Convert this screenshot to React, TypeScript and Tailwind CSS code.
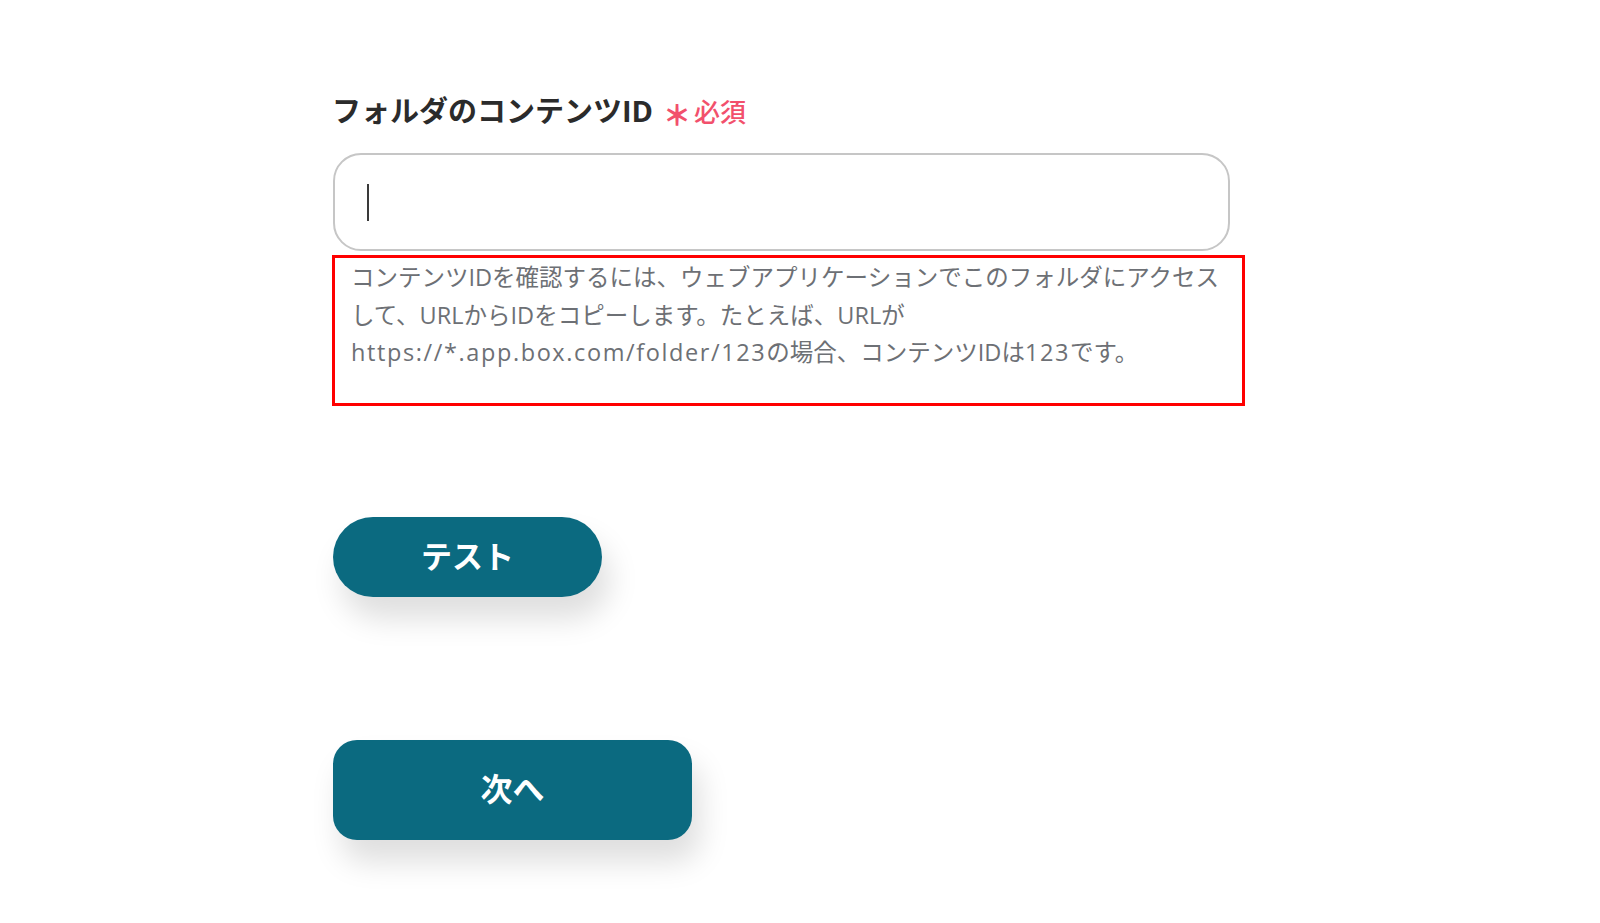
const jp = { fontFamily: '"Open Sans", "Noto Sans CJK JP", "Noto Sans", sans-serif' };

export default function App() {
  return (
    <div className="min-h-[923px] w-full bg-white pl-[332px] pt-[91px]" style={jp}>
      {/* field label */}
      <div className="flex h-[40px] items-center">
        <span className="text-[29px] font-bold leading-[40px] text-[#2b2b2b]">フォルダのコンテンツID</span>
        <span className="ml-[10px] translate-y-[4px] text-[28px] font-black leading-[40px] text-[#f2506c]">＊</span>
        <span className="ml-[3px] translate-y-[1px] text-[26px] font-medium leading-[40px] text-[#f2506c]">必須</span>
      </div>

      {/* input */}
      <div className="mt-[22px] ml-px flex h-[98px] w-[897px] items-center rounded-[28px] border-2 border-[#c6c6c6] px-[32px]">
        <div className="h-[37px] w-[2px] bg-[#3a3a3a]" />
      </div>

      {/* help text */}
      <div className="mt-[4px] h-[151px] w-[913px] border-[3px] border-[#ff0000] pl-[16px] pt-[1px] text-[23.5px] leading-[37.5px] text-[#6d7075]">
        <div className="whitespace-nowrap">コンテンツIDを確認するには、ウェブアプリケーションでこのフォルダにアクセス</div>
        <div className="whitespace-nowrap">して、URLからIDをコピーします。たとえば、URLが</div>
        <div className="whitespace-nowrap">
          <span className="tracking-[1.6px]">https://*.app.box.com/folder/123</span>の場合、コンテンツIDは
          <span className="tracking-[1.6px]">123</span>です。
        </div>
      </div>

      {/* actions */}
      <div className="mt-[111px] flex flex-col items-start gap-[143px]">
        <button
          type="button"
          className="ml-px flex h-[80px] w-[269px] items-center justify-center rounded-full bg-[#0b6a80] pb-[2px] text-[31px] font-bold text-white shadow-[8px_22px_30px_rgba(0,0,0,0.13)]"
        >
          テスト
        </button>
        <button
          type="button"
          className="ml-px flex h-[100px] w-[359px] items-center justify-center rounded-[24px] bg-[#0b6a80] pb-[3px] text-[32px] font-bold text-white shadow-[8px_22px_30px_rgba(0,0,0,0.13)]"
        >
          次へ
        </button>
      </div>
    </div>
  );
}
